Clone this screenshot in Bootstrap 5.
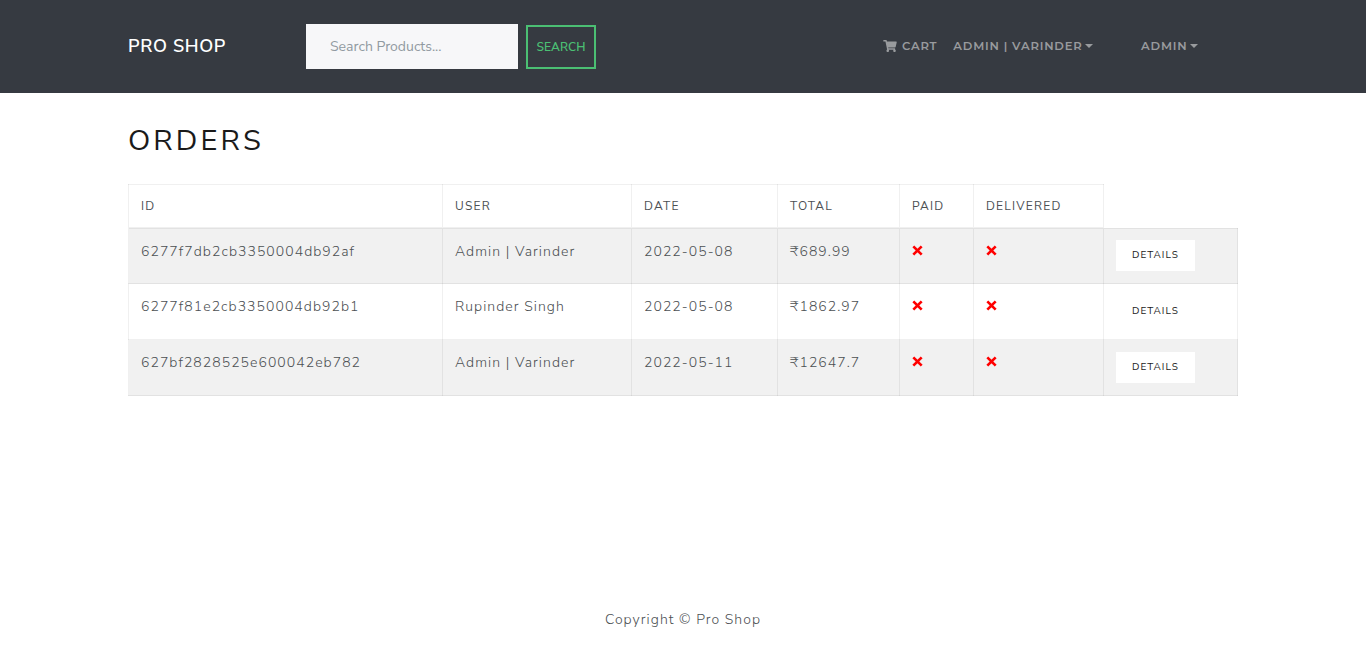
<!DOCTYPE html>
<html lang="en">
<head>
<meta charset="utf-8">
<meta name="viewport" content="width=device-width, initial-scale=1">
<title>Pro Shop</title>
<link rel="stylesheet" href="https://cdn.jsdelivr.net/npm/bootstrap@5.3.0/dist/css/bootstrap.min.css">
<style>
body{font-family:"Nunito Sans","Open Sans",sans-serif;font-size:14px;font-weight:350;line-height:1.5;color:#4c5053;letter-spacing:1.05px;background:#fff}
.shop-wrap{width:1140px;margin:0 auto;padding:0 15px}
.shop-bar{height:93px;background:#363a41;padding:0}
.shop-brand{width:178px;color:#fff;font-size:18px;font-weight:650;letter-spacing:.65px;text-decoration:none;line-height:27px}
.search-box{width:212px;height:45px;background:#f7f7f9;border:0;border-radius:0;padding:0 24px 1px;font-size:14px;color:#55595c;letter-spacing:0}
.search-box::placeholder{color:#919aa1;opacity:1}
.search-btn{width:70px;height:44px;margin-top:1px;padding:0;border:2px solid #4bbf73;border-radius:0;color:#4bbf73;font-size:12px;font-weight:600;letter-spacing:.1px}
.shop-link{padding:0 0 1px;font-family:Montserrat,"Nunito Sans","Open Sans",sans-serif;font-size:11.6px;font-weight:600;color:#999b9e;letter-spacing:.8px;line-height:18px;white-space:nowrap}
.dropdown-toggle.shop-link::after{margin-left:2.5px;border-width:4px 4px 0 4px;vertical-align:2px}
.admin-link{margin-right:40px}
.cart-icon{margin-right:5px;position:relative;top:-1px}
h1{font-size:29px;line-height:34px;color:#1a1a1a;letter-spacing:3.1px;margin:31px 0 26px;font-weight:400}
.orders{width:1110px;table-layout:fixed;border-collapse:collapse;margin:0}
.orders th,.orders td{border:1px solid rgba(0,0,0,.06);padding:12px;vertical-align:top;line-height:21px;white-space:nowrap}
.orders.table>:not(caption)>*>*{background:none;box-shadow:none;color:#4c5053}
.orders thead th{height:43px;font-size:12px;font-weight:450;letter-spacing:1.2px;border-bottom-width:2px;line-height:18px}
.orders tbody tr:nth-child(odd){background:#f1f1f1}
.orders tbody td{padding-top:11px;line-height:23px}
.orders tbody tr:first-child td{padding-bottom:11.5px}
.orders thead,.orders tbody,.orders tr{border:0}
.details-btn{display:block;width:79px;height:31px;padding:0;border:0;border-radius:0;background:#fff;font-size:10px;color:#1a1a1a;line-height:27px;letter-spacing:1.05px;margin-top:1px}
.orders tr:first-child .details-btn{margin-top:.25px;margin-bottom:.75px}
.no-mark{display:block;width:11px;height:11px;margin-top:5px}
.shop-foot{margin-top:213px}
</style>
</head>
<body>
<nav class="navbar shop-bar">
<div class="shop-wrap d-flex align-items-center">
<a class="shop-brand" href="#">PRO SHOP</a>
<form class="d-flex align-items-center gap-2"><input class="search-box form-control" placeholder="Search Products..."><button type="button" class="btn search-btn">SEARCH</button></form>
<div class="d-flex align-items-center ms-auto">
<a class="nav-link shop-link me-3" href="#"><svg width="14" height="12" viewBox="0 0 576 512" class="cart-icon" fill="currentColor"><path d="M528.12 301.319l47.273-208C578.806 78.301 567.391 64 551.99 64H159.208l-9.166-44.81C147.758 8.021 137.93 0 126.529 0H24C10.745 0 0 10.745 0 24v16c0 13.255 10.745 24 24 24h69.883l70.248 343.435C147.325 417.1 136 435.222 136 456c0 30.928 25.072 56 56 56s56-25.072 56-56c0-15.674-6.447-29.835-16.824-40h209.647C430.447 426.165 424 440.326 424 456c0 30.928 25.072 56 56 56s56-25.072 56-56c0-22.172-12.888-41.332-31.579-50.405l5.517-24.276c3.413-15.018-8.002-29.319-23.403-29.319H218.117l-6.545-32h293.145c11.206 0 20.92-7.754 23.403-18.681z"/></svg>CART</a>
<a class="nav-link shop-link dropdown-toggle me-5" href="#">ADMIN | VARINDER</a>
<a class="nav-link shop-link dropdown-toggle admin-link" href="#">ADMIN</a>
</div></div></nav>
<main class="shop-wrap">
<h1>ORDERS</h1>
<table class="table orders">
<colgroup><col style="width:314px"><col style="width:189px"><col style="width:146px"><col style="width:122px"><col style="width:74px"><col style="width:130px"><col style="width:134px"></colgroup>
<thead><tr><th>ID</th><th>USER</th><th>DATE</th><th>TOTAL</th><th>PAID</th><th>DELIVERED</th></tr></thead>
<tbody>
<tr><td>6277f7db2cb3350004db92af</td><td>Admin | Varinder</td><td>2022-05-08</td><td>₹689.99</td><td><svg class="no-mark" viewBox="0 0 10 10"><path d="M1.2 1.2 8.8 8.8M8.8 1.2 1.2 8.8" stroke="red" stroke-width="2.4"/></svg></td><td><svg class="no-mark" viewBox="0 0 10 10"><path d="M1.2 1.2 8.8 8.8M8.8 1.2 1.2 8.8" stroke="red" stroke-width="2.4"/></svg></td><td><button class="btn details-btn">DETAILS</button></td></tr>
<tr><td>6277f81e2cb3350004db92b1</td><td>Rupinder Singh</td><td>2022-05-08</td><td>₹1862.97</td><td><svg class="no-mark" viewBox="0 0 10 10"><path d="M1.2 1.2 8.8 8.8M8.8 1.2 1.2 8.8" stroke="red" stroke-width="2.4"/></svg></td><td><svg class="no-mark" viewBox="0 0 10 10"><path d="M1.2 1.2 8.8 8.8M8.8 1.2 1.2 8.8" stroke="red" stroke-width="2.4"/></svg></td><td><button class="btn details-btn">DETAILS</button></td></tr>
<tr><td>627bf2828525e600042eb782</td><td>Admin | Varinder</td><td>2022-05-11</td><td>₹12647.7</td><td><svg class="no-mark" viewBox="0 0 10 10"><path d="M1.2 1.2 8.8 8.8M8.8 1.2 1.2 8.8" stroke="red" stroke-width="2.4"/></svg></td><td><svg class="no-mark" viewBox="0 0 10 10"><path d="M1.2 1.2 8.8 8.8M8.8 1.2 1.2 8.8" stroke="red" stroke-width="2.4"/></svg></td><td><button class="btn details-btn">DETAILS</button></td></tr>
</tbody></table>
</main>
<footer class="text-center shop-foot">Copyright © Pro Shop</footer>
<script src="https://cdn.jsdelivr.net/npm/bootstrap@5.3.0/dist/js/bootstrap.bundle.min.js"></script>
</body>
</html>
